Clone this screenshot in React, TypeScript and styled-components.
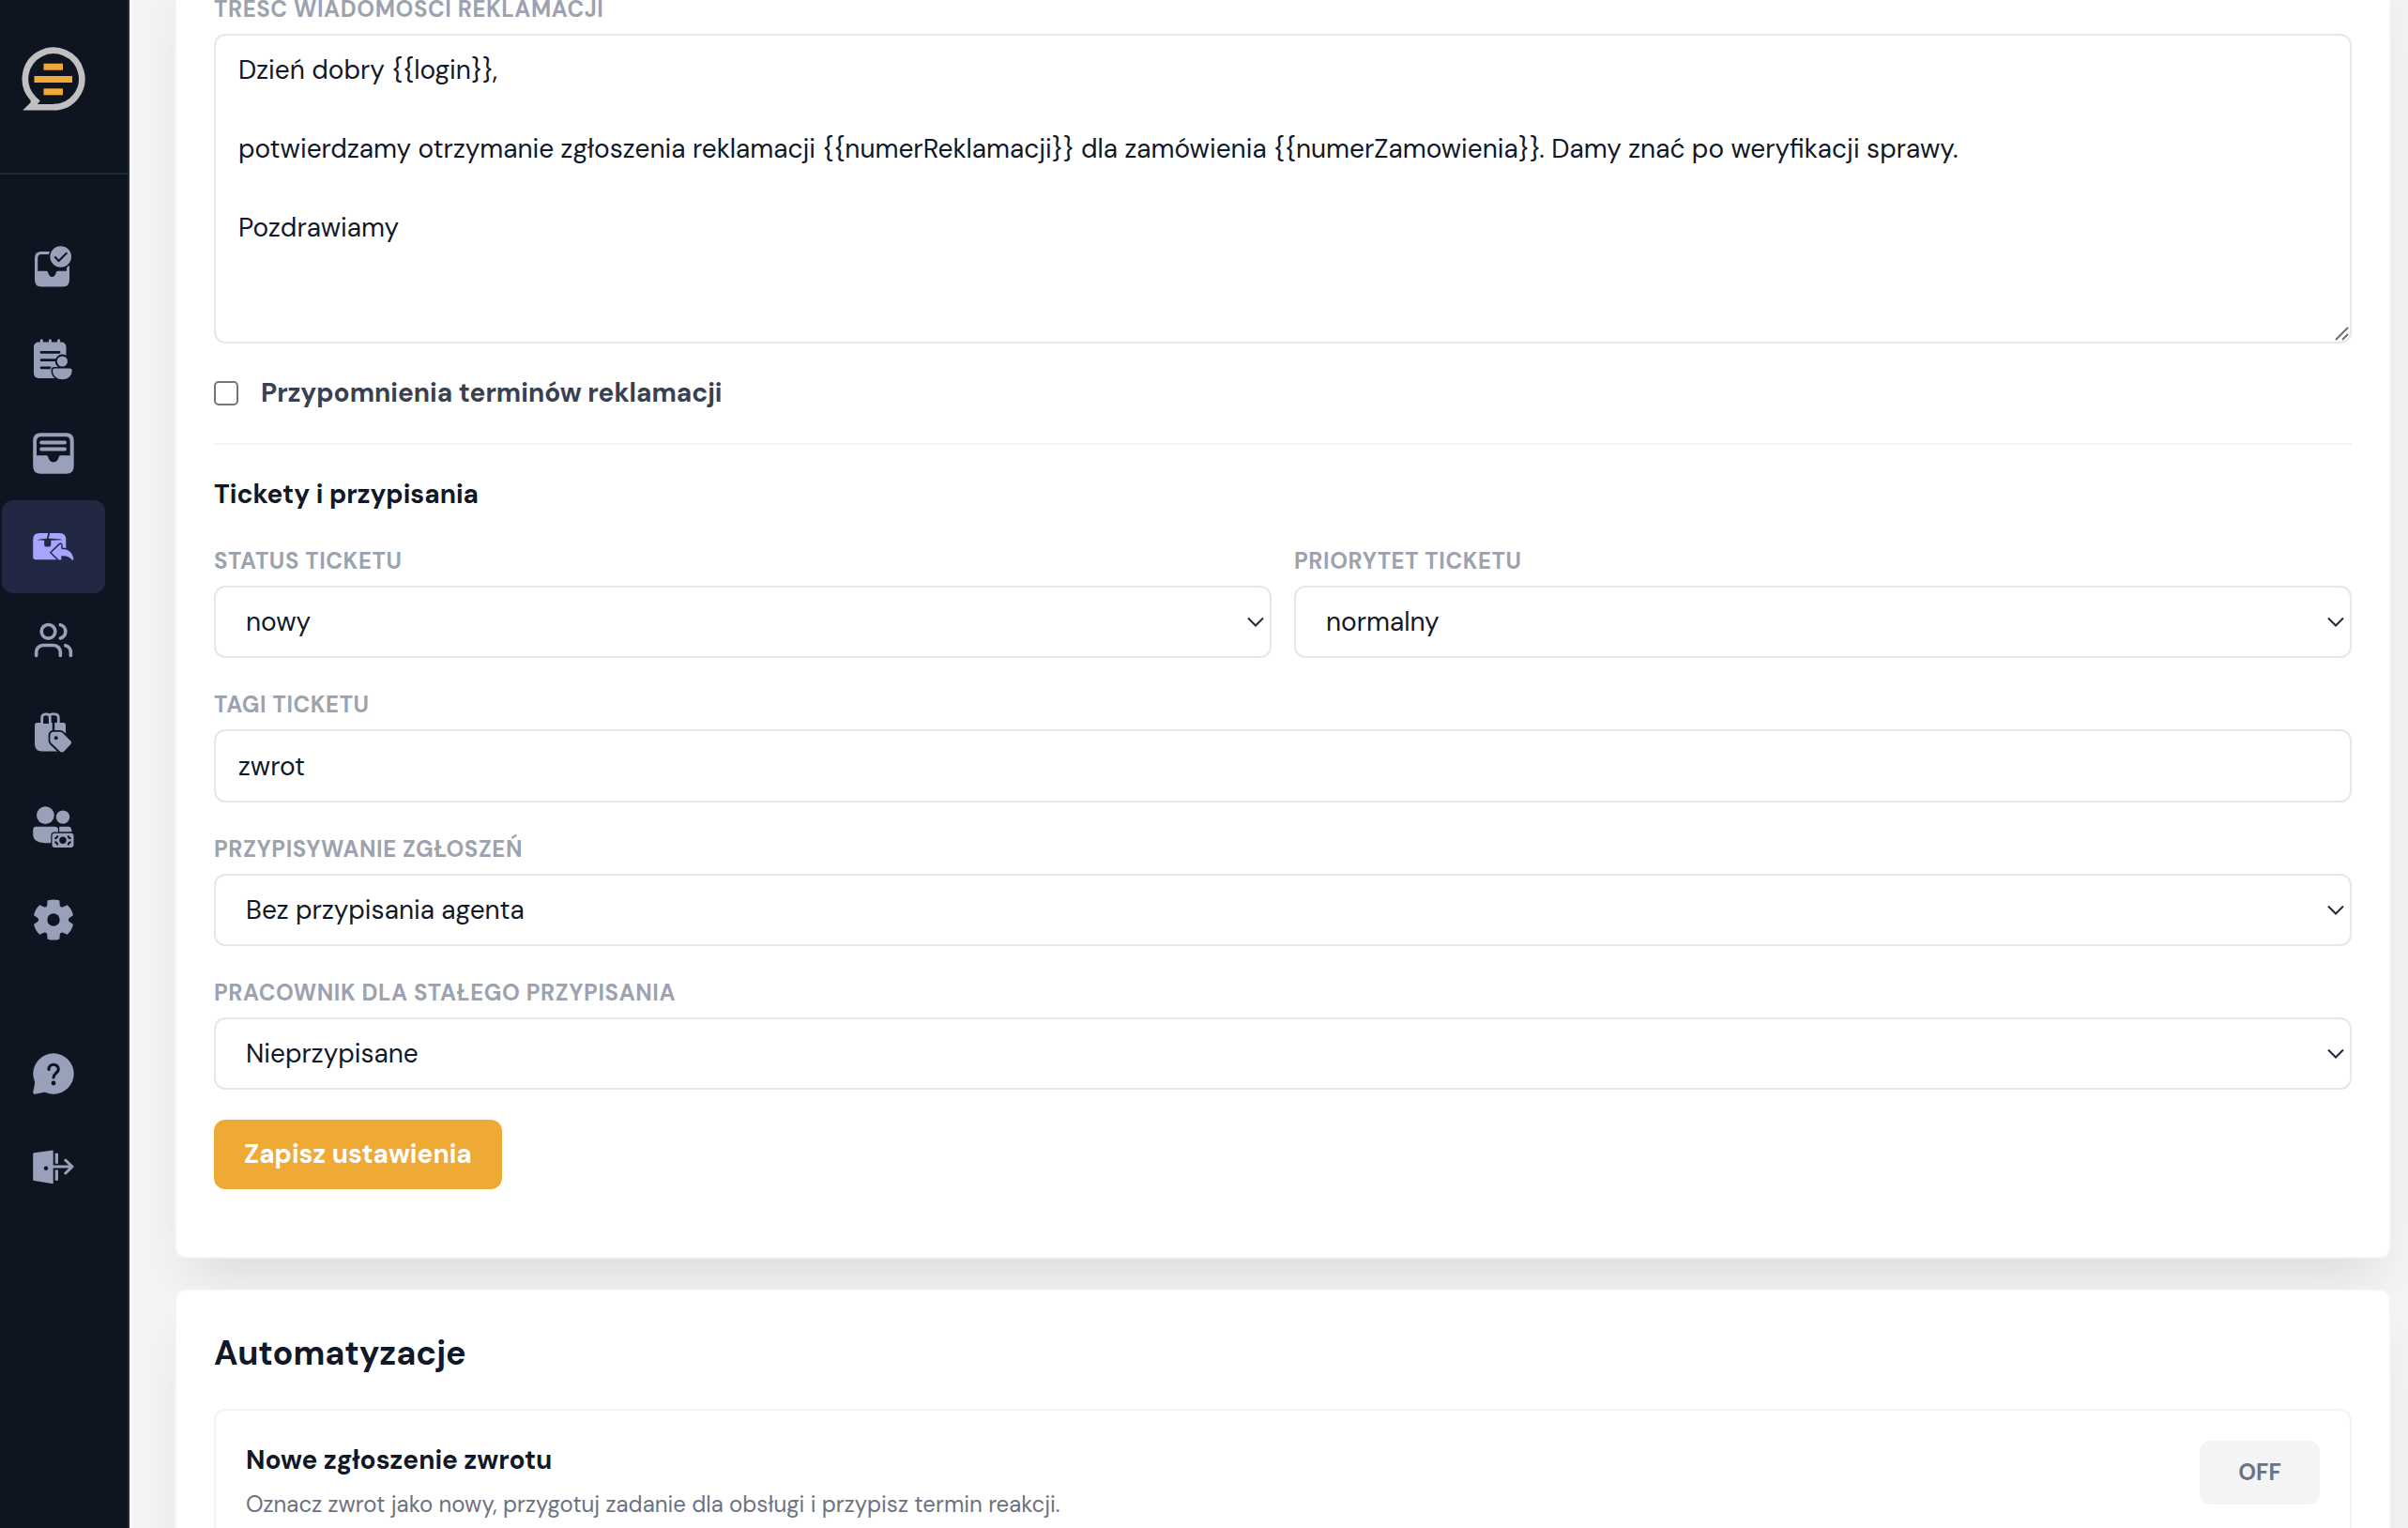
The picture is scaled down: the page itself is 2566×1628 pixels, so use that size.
import React, { useId, useState } from "react";
import styled, { createGlobalStyle } from "styled-components";
import { Users } from "lucide-react";

const color = {
  night: "#0e1521",
  nightLine: "#1f2937",
  active: "#222844",
  icon: "#98a1b9",
  iconActive: "#a3a5ff",
  brand: "#efaa36",
  ink: "#111827",
  inkSoft: "#374151",
  muted: "#6b7280",
  label: "#9ca3af",
  line: "#e5e7eb",
  lineSoft: "#f3f4f6",
  page: "#f3f4f6",
};

const GlobalStyle = createGlobalStyle`
  *, *::before, *::after { box-sizing: border-box; }
  body {
    margin: 0;
    background: ${color.page};
    color: ${color.ink};
    font-family: "DM Sans", Inter, "Noto Sans", sans-serif;
    font-size: 28px;
    line-height: 42px;
  }
  button, input, select, textarea { font: inherit; color: inherit; margin: 0; }
`;

const Shell = styled.div`
  display: flex;
  height: 100vh;
  overflow: hidden;
`;

const Sidebar = styled.aside`
  flex: 0 0 138px;
  display: flex;
  flex-direction: column;
  background: ${color.night};
  border-right: 2px solid ${color.nightLine};
`;

const Brand = styled.a`
  display: block;
  height: 186px;
  padding: 50px 23px;
  border-bottom: 2px solid ${color.nightLine};
`;

const Nav = styled.nav`
  display: flex;
  flex-direction: column;
  gap: 64px;
  padding: 48px 24px 48px 2px;
`;

const NavGroup = styled.div<{ $height: number }>`
  display: grid;
  grid-auto-rows: 1fr;
  height: ${(p) => p.$height}px;
`;

const NavLink = styled.a<{ $active?: boolean }>`
  display: flex;
  align-items: center;
  justify-content: center;
  border-radius: 12px;
  color: ${(p) => (p.$active ? color.iconActive : color.icon)};
  background: ${(p) => (p.$active ? color.active : "transparent")};
  --cut: ${(p) => (p.$active ? color.active : color.night)};
`;

const Main = styled.main`
  flex: 1;
  min-width: 0;
  display: flex;
  flex-direction: column;
  gap: 32px;
  padding: 0 18px 48px 48px;
`;

const Card = styled.section<{ $scrolled?: boolean }>`
  flex: none;
  display: flex;
  flex-direction: column;
  gap: 32px;
  margin-top: ${(p) => (p.$scrolled ? "-50px" : "0")};
  padding: 40px;
  border: 2px solid ${color.lineSoft};
  border-radius: 12px;
  background: #fff;
  box-shadow: 0 34px 54px -16px rgba(0, 0, 0, 0.1);
`;

const Form = styled.form`
  display: flex;
  flex-direction: column;
  gap: 32px;
  padding-bottom: 32px;
`;

const FormSection = styled.div`
  display: flex;
  flex-direction: column;
  gap: 32px;
  padding-top: 32px;
  border-top: 2px solid ${color.lineSoft};
`;

const Columns = styled.div`
  display: grid;
  grid-template-columns: 1fr 1fr;
  gap: 24px;
`;

const Field = styled.div`
  display: flex;
  flex-direction: column;
  gap: 8px;
`;

const Label = styled.label`
  font-size: 24px;
  line-height: 36px;
  font-weight: 700;
  letter-spacing: 0.025em;
  text-transform: uppercase;
  color: ${color.label};
`;

const Stack = styled.div`
  display: grid;
  > * { grid-area: 1 / 1; }
`;

const TextArea = styled.textarea`
  display: block;
  width: 100%;
  padding: 16px 24px;
  border: 2px solid ${color.line};
  border-radius: 12px;
  background: #fff;
  resize: none;
`;

const Grip = styled.svg`
  align-self: end;
  justify-self: end;
  margin: 3px;
  pointer-events: none;
`;

const TextInput = styled.input`
  width: 100%;
  height: 78px;
  padding: 0 24px;
  border: 2px solid ${color.line};
  border-radius: 12px;
  background: #fff;
`;

const SelectBox = styled.select`
  width: 100%;
  height: 77px;
  padding: 0 48px 0 32px;
  border: 2px solid ${color.line};
  border-radius: 12px;
  background: #fff;
  appearance: none;
`;

const Chevron = styled.svg`
  align-self: center;
  justify-self: end;
  margin-right: 8px;
  pointer-events: none;
`;

const CheckRow = styled.label`
  display: flex;
  align-items: center;
  gap: 24px;
  font-weight: 700;
  color: ${color.inkSoft};
`;

const CheckBox = styled.input`
  appearance: none;
  width: 26px;
  height: 26px;
  border: 2px solid #767676;
  border-radius: 5px;
  background: #fff;
  &:checked { background: ${color.brand}; }
`;

const SectionTitle = styled.h3`
  margin: 0;
  font-size: 28px;
  line-height: 42px;
  font-weight: 700;
`;

const CardTitle = styled.h2`
  margin: 0;
  font-size: 36px;
  line-height: 54px;
  font-weight: 700;
`;

const SaveButton = styled.button`
  align-self: flex-start;
  padding: 16px 32px;
  border: 0;
  border-radius: 12px;
  background: ${color.brand};
  color: #fff;
  font-weight: 700;
`;

const Rule = styled.article`
  display: flex;
  align-items: flex-start;
  justify-content: space-between;
  gap: 32px;
  padding: 32px;
  border: 2px solid ${color.lineSoft};
  border-radius: 12px;
`;

const RuleText = styled.div`
  display: flex;
  flex-direction: column;
  gap: 8px;
`;

const RuleNote = styled.p`
  margin: 0;
  font-size: 24px;
  line-height: 36px;
  color: ${color.muted};
`;

const Toggle = styled.button`
  min-width: 128px;
  padding: 16px 32px;
  border: 0;
  border-radius: 12px;
  background: ${color.lineSoft};
  color: ${color.muted};
  font-size: 24px;
  line-height: 36px;
  font-weight: 700;
`;

function Glyph({ children }: { children: React.ReactNode }) {
  return (
    <svg width="44" height="44" viewBox="0 0 44 44" fill="currentColor" aria-hidden="true">
      {children}
    </svg>
  );
}

const cut = { stroke: "var(--cut)" };
const cutFill = { fill: "var(--cut)" };

const Logo = () => (
  <svg width="68" height="68" viewBox="0 0 68 68" aria-hidden="true">
    <path d="M34 64.2A30.2 30.2 0 1 0 12 54.6" fill="none" stroke="#c0c0c0" strokeWidth="6.7" />
    <path d="M1.3 67.6H34.2V60.9H16.8L19.8 57.4L14 52L9.6 57V59.2Z" fill="#c0c0c0" />
    <g fill={color.brand}>
      <rect x="23.5" y="17.7" width="20.5" height="7" />
      <rect x="13.5" y="31" width="40.5" height="7" />
      <rect x="23.5" y="44.3" width="20.5" height="7" />
    </g>
  </svg>
);

const InboxCheckIcon = () => (
  <Glyph>
    <path
      fillRule="evenodd"
      d="M9 6H32Q39 6 39 13V36Q39 43.500 32 43.500H9Q2 43.500 2 36V13Q2 6 9 6ZM9 9Q5.200 9 5.200 13V26.800H14.500Q16 26.800 16.300 28.600Q17.500 33 20.500 33Q23.700 33 24.700 28.600Q25.200 26.800 26.800 26.800H36V13Q36 9 32 9Z"
    />
    <circle cx="29.700" cy="11.500" r="13" {...cutFill} />
    <circle cx="29.700" cy="11.500" r="11.300" />
    <path d="M23.300 11.500L27.600 16L36.300 7.300" fill="none" {...cut} strokeWidth="2" />
  </Glyph>
);

const NotesUserIcon = () => (
  <Glyph>
    <rect x="1" y="3.500" width="34.500" height="38.500" rx="5" />
    <path d="M9.300 1.700V6M18.400 1.700V6M27.600 1.700V6" stroke="currentColor" strokeWidth="3" strokeLinecap="round" />
    <path d="M9 14.400H28M9 22.700H24M9 30.800H18" {...cut} strokeWidth="2.800" strokeLinecap="round" />
    <circle cx="31.400" cy="24" r="6.600" {...cut} strokeWidth="2" />
    <path d="M23 30.800H39.500Q42.500 30.800 42.500 34C42.500 40 37.500 44 31.500 44S20.300 40 20.300 34Q20.300 30.800 23 30.800Z" {...cut} strokeWidth="1.600" />
  </Glyph>
);

const InboxIcon = () => (
  <Glyph>
    <path
      fillRule="evenodd"
      d="M8.500 .2H35.500Q43.700 .2 43.700 8.500V35.500Q43.700 43.800 35.500 43.800H8.500Q.2 43.800 .2 35.500V8.500Q.2 .2 8.500 .2ZM9 4.200Q4 4.200 4 9V24.300H14.500Q16 24.300 16.300 26Q17.500 31.400 22 31.400Q26.500 31.400 27.600 26Q28 24.300 29.500 24.300H39.700V9Q39.700 4.200 35 4.200Z"
    />
    <path d="M9.200 10.600H34M9.200 17.600H34" stroke="currentColor" strokeWidth="4" strokeLinecap="round" />
  </Glyph>
);

const BoxReturnIcon = () => (
  <Glyph>
    <path d="M7 8H28.500Q35.300 8 35.300 15V36.300H3Q.2 36.300 .2 33.500V15Q.2 8 7 8Z" />
    <path d="M17.400 7.500L15.600 14.500" {...cut} strokeWidth="1.800" />
    <path d="M4 15.200Q9 13.500 17.500 13.700Q27 13.500 31.500 15.200L19.300 15.800V20.500Q19.300 22.500 17.500 22.500H14Q12.200 22.500 12.200 20.500V15.800Z" {...cutFill} />
    <path d="M30 24H36.500V38H30Z" {...cutFill} />
    <path
      d="M18.800 28.800L28.200 19.600Q30.800 18 31 21V24.200C38.500 24.200 43 28.500 44 34.500Q44.400 38 41.500 37.400C39 33.500 36 32.800 31 33V37.300H27.500Z"
      {...cut}
      strokeWidth="1.500"
      strokeLinejoin="round"
    />
  </Glyph>
);

const BagTagIcon = () => (
  <Glyph>
    <path d="M4.500 11H32.500Q35 11 35 13.500V41.500H10Q2 41.500 2 33.500V13.500Q2 11 4.500 11Z" />
    <path d="M9.700 12V6Q9.700 1.800 13.500 1.800H14.500Q18.300 1.800 18.300 6V12" {...cutFill} stroke="currentColor" strokeWidth="2.800" />
    <path d="M17 3Q18.500 1.800 21 1.800H23.500Q27.300 1.800 27.300 6V12" fill="none" stroke="currentColor" strokeWidth="2.800" />
    <path d="M22 5V20" {...cut} strokeWidth="2.400" />
    <path
      d="M22.500 19.800H29Q31 19.800 32.500 21.300L41 29.800Q43 32 41 34.500L33.500 42.500Q31 44.600 28.500 42.500L19 33.500Q17.500 32 17.500 30V24.500Q17.500 19.800 22.500 19.800Z"
      {...cut}
      strokeWidth="1.800"
    />
    <circle cx="24.700" cy="27.300" r="2" {...cutFill} />
  </Glyph>
);

const UsersMoneyIcon = () => (
  <Glyph>
    <circle cx="13.400" cy="9.600" r="9.400" />
    <circle cx="32" cy="11.600" r="7.200" />
    <path d="M3.500 21.800H23.500Q27 21.800 27 25.300V30L19 39.300H14Q.2 39 .2 30V25.300Q.2 21.800 3.500 21.800Z" />
    <path d="M28.200 21.800H38Q41.500 21.800 41.500 27.500H28.200Z" />
    <rect x="19.300" y="27.500" width="25" height="17" rx="4" {...cutFill} />
    <rect x="20.500" y="28.700" width="23" height="15.200" rx="3" />
    <circle cx="32" cy="36.300" r="3.700" {...cutFill} />
    <path
      d="M23.300 34.300Q26 34.200 26.300 31.300M37.700 31.300Q38 34.200 40.700 34.300M23.300 38.300Q26 38.400 26.300 41.300M37.700 41.300Q38 38.400 40.700 38.300"
      fill="none"
      {...cut}
      strokeWidth="2"
    />
  </Glyph>
);

const polar = (deg: number, r: number) => {
  const a = (deg * Math.PI) / 180;
  return `${(22 + r * Math.cos(a)).toFixed(2)} ${(22 + r * Math.sin(a)).toFixed(2)}`;
};

const gearPath =
  [0, 1, 2, 3, 4, 5]
    .map((k) => {
      const mid = k * 60 - 90;
      return `${k ? "L" : "M"}${polar(mid - 16, 20.8)}Q${polar(mid, 21.8)} ${polar(mid + 16, 20.8)}L${polar(mid + 22, 16.3)}Q${polar(mid + 30, 14.2)} ${polar(mid + 38, 16.3)}`;
    })
    .join("") + "Z";

const GearIcon = () => (
  <Glyph>
    <path d={gearPath} stroke="currentColor" strokeWidth="1.400" strokeLinejoin="round" />
    <circle cx="22" cy="22" r="6.700" {...cutFill} />
  </Glyph>
);

const HelpIcon = () => (
  <Glyph>
    <circle cx="22" cy="22" r="21.700" />
    <path d="M2.300 27Q2.500 32 .3 41Q0 44 2.500 43.700L13 41.400L22 34Z" />
    <path d="M17 17.500C16.500 10.500 27.300 10.700 27.300 17C27.300 21 22 21.800 22 26" fill="none" {...cut} strokeWidth="3.200" strokeLinecap="round" />
    <circle cx="22" cy="32" r="2.400" {...cutFill} />
  </Glyph>
);

const ExitIcon = () => (
  <Glyph>
    <path d="M.2 8.500Q.2 7.500 1.300 7.300L21.700 4.500V40.200L1.300 37Q.2 36.900 .2 36Z" />
    <circle cx="14" cy="23.700" r="2.200" {...cutFill} />
    <path d="M23.700 7.700H27V18.800H23.700ZM23.700 25.500H27V36.700H23.700Z" />
    <path d="M21 22H41.500M34.800 15.200L42 22L34.800 29" fill="none" stroke="currentColor" strokeWidth="3" strokeLinecap="round" strokeLinejoin="round" />
  </Glyph>
);

const UsersIcon = () => <Users size={44} strokeWidth={2} aria-hidden="true" />;

const mainLinks = [
  { name: "Zadania", Icon: InboxCheckIcon },
  { name: "Notatki", Icon: NotesUserIcon },
  { name: "Skrzynka", Icon: InboxIcon },
  { name: "Zwroty", Icon: BoxReturnIcon, active: true },
  { name: "Klienci", Icon: UsersIcon },
  { name: "Produkty", Icon: BagTagIcon },
  { name: "Rozliczenia", Icon: UsersMoneyIcon },
  { name: "Ustawienia", Icon: GearIcon },
];

const footLinks = [
  { name: "Pomoc", Icon: HelpIcon },
  { name: "Wyloguj", Icon: ExitIcon },
];

function SelectField({ label, options }: { label: string; options: string[] }) {
  const id = useId();
  return (
    <Field>
      <Label htmlFor={id}>{label}</Label>
      <Stack>
        <SelectBox id={id} defaultValue={options[0]}>
          {options.map((o) => (
            <option key={o}>{o}</option>
          ))}
        </SelectBox>
        <Chevron width="18" height="12" viewBox="0 0 18 12" aria-hidden="true">
          <path d="M1 1.500L9 9.500L17 1.500" fill="none" stroke={color.nightLine} strokeWidth="2" />
        </Chevron>
      </Stack>
    </Field>
  );
}

const message = `Dzień dobry {{login}},

potwierdzamy otrzymanie zgłoszenia reklamacji {{numerReklamacji}} dla zamówienia {{numerZamowienia}}. Damy znać po weryfikacji sprawy.

Pozdrawiamy`;

export default function App() {
  const [ruleOn, setRuleOn] = useState(false);
  return (
    <>
      <GlobalStyle />
      <Shell>
        <Sidebar>
          <Brand href="#start" aria-label="Start">
            <Logo />
          </Brand>
          <Nav>
            <NavGroup $height={796}>
              {mainLinks.map(({ name, Icon, active }) => (
                <NavLink key={name} href={`#${name}`} aria-label={name} $active={active}>
                  <Icon />
                </NavLink>
              ))}
            </NavGroup>
            <NavGroup $height={199}>
              {footLinks.map(({ name, Icon }) => (
                <NavLink key={name} href={`#${name}`} aria-label={name}>
                  <Icon />
                </NavLink>
              ))}
            </NavGroup>
          </Nav>
        </Sidebar>

        <Main>
          <Card $scrolled>
            <Form onSubmit={(e) => e.preventDefault()}>
              <Field>
                <Label htmlFor="message">Treść wiadomości reklamacji</Label>
                <Stack>
                  <TextArea id="message" rows={7} defaultValue={message} />
                  <Grip width="15" height="15" viewBox="0 0 15 15" aria-hidden="true">
                    <path d="M1 14L14 1M8 14L14 8" stroke="#6f6f6f" strokeWidth="2" />
                  </Grip>
                </Stack>
              </Field>

              <CheckRow>
                <CheckBox type="checkbox" />
                Przypomnienia terminów reklamacji
              </CheckRow>

              <FormSection>
                <SectionTitle>Tickety i przypisania</SectionTitle>
                <Columns>
                  <SelectField label="Status ticketu" options={["nowy"]} />
                  <SelectField label="Priorytet ticketu" options={["normalny"]} />
                </Columns>
                <Field>
                  <Label htmlFor="tags">Tagi ticketu</Label>
                  <TextInput id="tags" type="text" defaultValue="zwrot" />
                </Field>
                <SelectField label="Przypisywanie zgłoszeń" options={["Bez przypisania agenta"]} />
                <SelectField label="Pracownik dla stałego przypisania" options={["Nieprzypisane"]} />
                <SaveButton type="submit">Zapisz ustawienia</SaveButton>
              </FormSection>
            </Form>
          </Card>

          <Card>
            <CardTitle>Automatyzacje</CardTitle>
            <Rule>
              <RuleText>
                <SectionTitle>Nowe zgłoszenie zwrotu</SectionTitle>
                <RuleNote>Oznacz zwrot jako nowy, przygotuj zadanie dla obsługi i przypisz termin reakcji.</RuleNote>
              </RuleText>
              <Toggle type="button" aria-pressed={ruleOn} onClick={() => setRuleOn(!ruleOn)}>
                {ruleOn ? "ON" : "OFF"}
              </Toggle>
            </Rule>
          </Card>
        </Main>
      </Shell>
    </>
  );
}
